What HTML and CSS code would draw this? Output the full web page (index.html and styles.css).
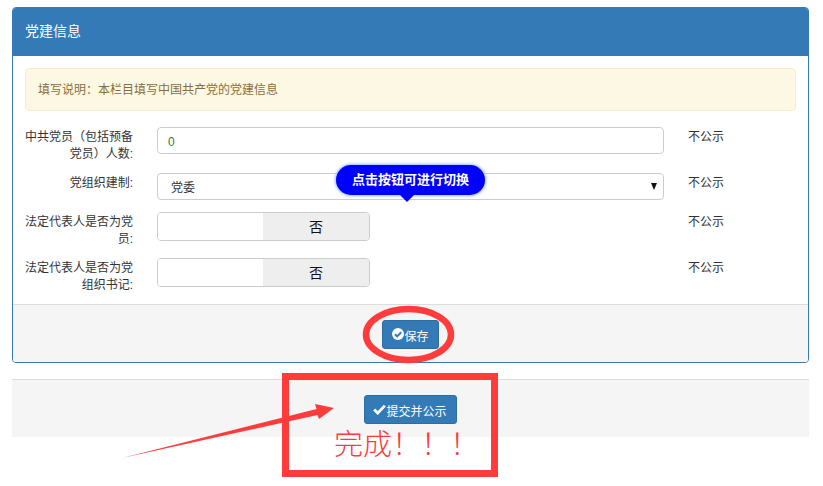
FILE: index.html
```html
<!DOCTYPE html>
<html lang="zh">
<head>
<meta charset="utf-8">
<title>党建信息</title>
<link rel="stylesheet" href="styles.css">
</head>
<body>
<div class="page">
  <section class="panel">
    <header class="panel-heading">党建信息</header>
    <div class="panel-body">
      <div class="alert">填写说明：本栏目填写中国共产党的党建信息</div>
      <div class="row">
        <label class="label">中共党员（包括预备党员）人数:</label>
        <div class="control"><div class="input num">0</div></div>
        <div class="pub">不公示</div>
      </div>
      <div class="row row-short">
        <label class="label">党组织建制:</label>
        <div class="control">
          <div class="input select"><span>党委</span><span class="caret"></span></div>
        </div>
        <div class="pub">不公示</div>
      </div>
      <div class="row">
        <label class="label">法定代表人是否为党员:</label>
        <div class="control"><div class="switch"><span class="off-blank"></span><span class="off">否</span></div></div>
        <div class="pub">不公示</div>
      </div>
      <div class="row">
        <label class="label">法定代表人是否为党组织书记:</label>
        <div class="control"><div class="switch"><span class="off-blank"></span><span class="off">否</span></div></div>
        <div class="pub">不公示</div>
      </div>
    </div>
    <footer class="panel-footer">
      <button class="btn btn-save" type="button">
        <svg class="ico" viewBox="0 0 12 12" width="12" height="12"><circle cx="6" cy="6" r="6" fill="#fff"/><path d="M3 6.2 5.2 8.4 9.2 4.2" fill="none" stroke="#337ab7" stroke-width="2"/></svg>保存
      </button>
    </footer>
  </section>
  <div class="submit-bar">
    <button class="btn btn-submit" type="button">
      <svg class="ico" viewBox="0 0 13 11" width="13" height="11"><path d="M1.2 5.6 4.7 9.1 11.8 1.6" fill="none" stroke="#fff" stroke-width="2.8"/></svg>提交并公示
    </button>
  </div>
</div>

<div class="tip">点击按钮可进行切换</div>

<svg class="marks" width="823" height="486" viewBox="0 0 823 486">
  <ellipse cx="408.500" cy="334.500" rx="42.500" ry="25.500" fill="none" stroke="#ff3b3b" stroke-width="6.500"/>
  <rect x="285.500" y="376.500" width="209" height="97" fill="none" stroke="#ff3b3b" stroke-width="7"/>
  <path d="M122 458 L316.500 409 L315 404 L334 408 L319 419 L317.500 415 Z" fill="#ff3b3b"/>
</svg>
<div class="done">完成！！！</div>
</body>
</html>
```
FILE: styles.css
```css
* { box-sizing: border-box; }
html, body { margin: 0; padding: 0; }
body {
  width: 823px;
  height: 486px;
  overflow: hidden;
  position: relative;
  background: #fff;
  color: #333;
  font-family: "Liberation Sans", "Noto Sans CJK SC", sans-serif;
  font-size: 12px;
  text-spacing-trim: space-all;
}
.page { padding: 7px 14px 0 12px; }
.panel {
  border: 1px solid #337ab7;
  border-radius: 4px;
  overflow: hidden;
  height: 356px;
  display: flex;
  flex-direction: column;
}
.panel-heading {
  background: #337ab7;
  color: #fff;
  height: 48px;
  padding: 14px 12px 0;
  font-size: 14px;
  line-height: 18px;
}
.panel-body { padding: 12px 12px 0; flex: 1; }
.alert {
  height: 43px;
  background: #fcf8e3;
  border: 1px solid #faebcc;
  border-radius: 4px;
  color: #8a6d3b;
  padding: 0 12px;
  line-height: 43px;
  margin-bottom: 16px;
}
.row {
  display: grid;
  grid-template-columns: 108px 507px auto;
  column-gap: 24px;
  height: 34px;
  margin-bottom: 12px;
  align-items: start;
}
.row-short { height: 27px; }
.label {
  text-align: right;
  line-height: 17px;
  margin-top: 2px;
  color: #333;
}
.input {
  height: 27px;
  background: #fff;
  border: 1px solid #ccc;
  border-radius: 4px;
  line-height: 27px;
}
.num { padding-left: 10px; color: #3c763d; line-height: 28px; }
.select {
  display: flex;
  align-items: center;
  justify-content: space-between;
  padding: 3px 6px 0 13px;
}
.caret {
  width: 0;
  height: 0;
  margin-top: -3px;
  border-left: 3.5px solid transparent;
  border-right: 3.5px solid transparent;
  border-top: 7px solid #111;
}
.switch {
  display: flex;
  width: 213px;
  height: 29px;
  border: 1px solid #ccc;
  border-radius: 4px;
  overflow: hidden;
}
.off-blank { width: 105px; background: #fff; }
.off {
  flex: 1;
  background: #eee;
  color: #111;
  text-align: center;
  font-size: 14px;
  line-height: 28px;
}
.pub { line-height: 17px; margin-top: 2px; }
.panel-footer {
  height: 58px;
  background: #f5f5f5;
  border-top: 1px solid #ddd;
  display: flex;
  justify-content: center;
  padding-top: 15px;
}
.btn {
  display: inline-flex;
  align-items: center;
  justify-content: center;
  height: 29px;
  background: #337ab7;
  border: 1px solid #2e6da4;
  border-radius: 3px;
  color: #fff;
  font: inherit;
  padding: 2px 0 0;
}
.btn-save { width: 57px; }
.btn-submit { width: 93px; }
.ico { flex: none; margin-top: -3px; }
.submit-bar {
  margin-top: 16px;
  height: 58px;
  background: #f5f5f5;
  border-top: 1px solid #ddd;
  display: flex;
  justify-content: center;
  padding-top: 15px;
  padding-right: 1px;
}
.tip {
  position: absolute;
  left: 336px;
  top: 165px;
  width: 149px;
  height: 30px;
  background: #0000ff;
  color: #fff;
  border-radius: 15px;
  box-shadow: 0 0 3px 1px #8fb8ff;
  text-align: center;
  font-weight: 700;
  font-size: 13px;
  line-height: 29px;
}
.tip::after {
  content: "";
  position: absolute;
  left: 64px;
  top: 30px;
  border-left: 7px solid transparent;
  border-right: 7px solid transparent;
  border-top: 7px solid #0000ff;
}
.marks { position: absolute; left: 0; top: 0; pointer-events: none; }
.done {
  position: absolute;
  left: 334px;
  top: 425px;
  color: #ff3b3b;
  font-size: 29px;
  line-height: 40px;
  font-weight: 300;
  white-space: nowrap;
}
```
